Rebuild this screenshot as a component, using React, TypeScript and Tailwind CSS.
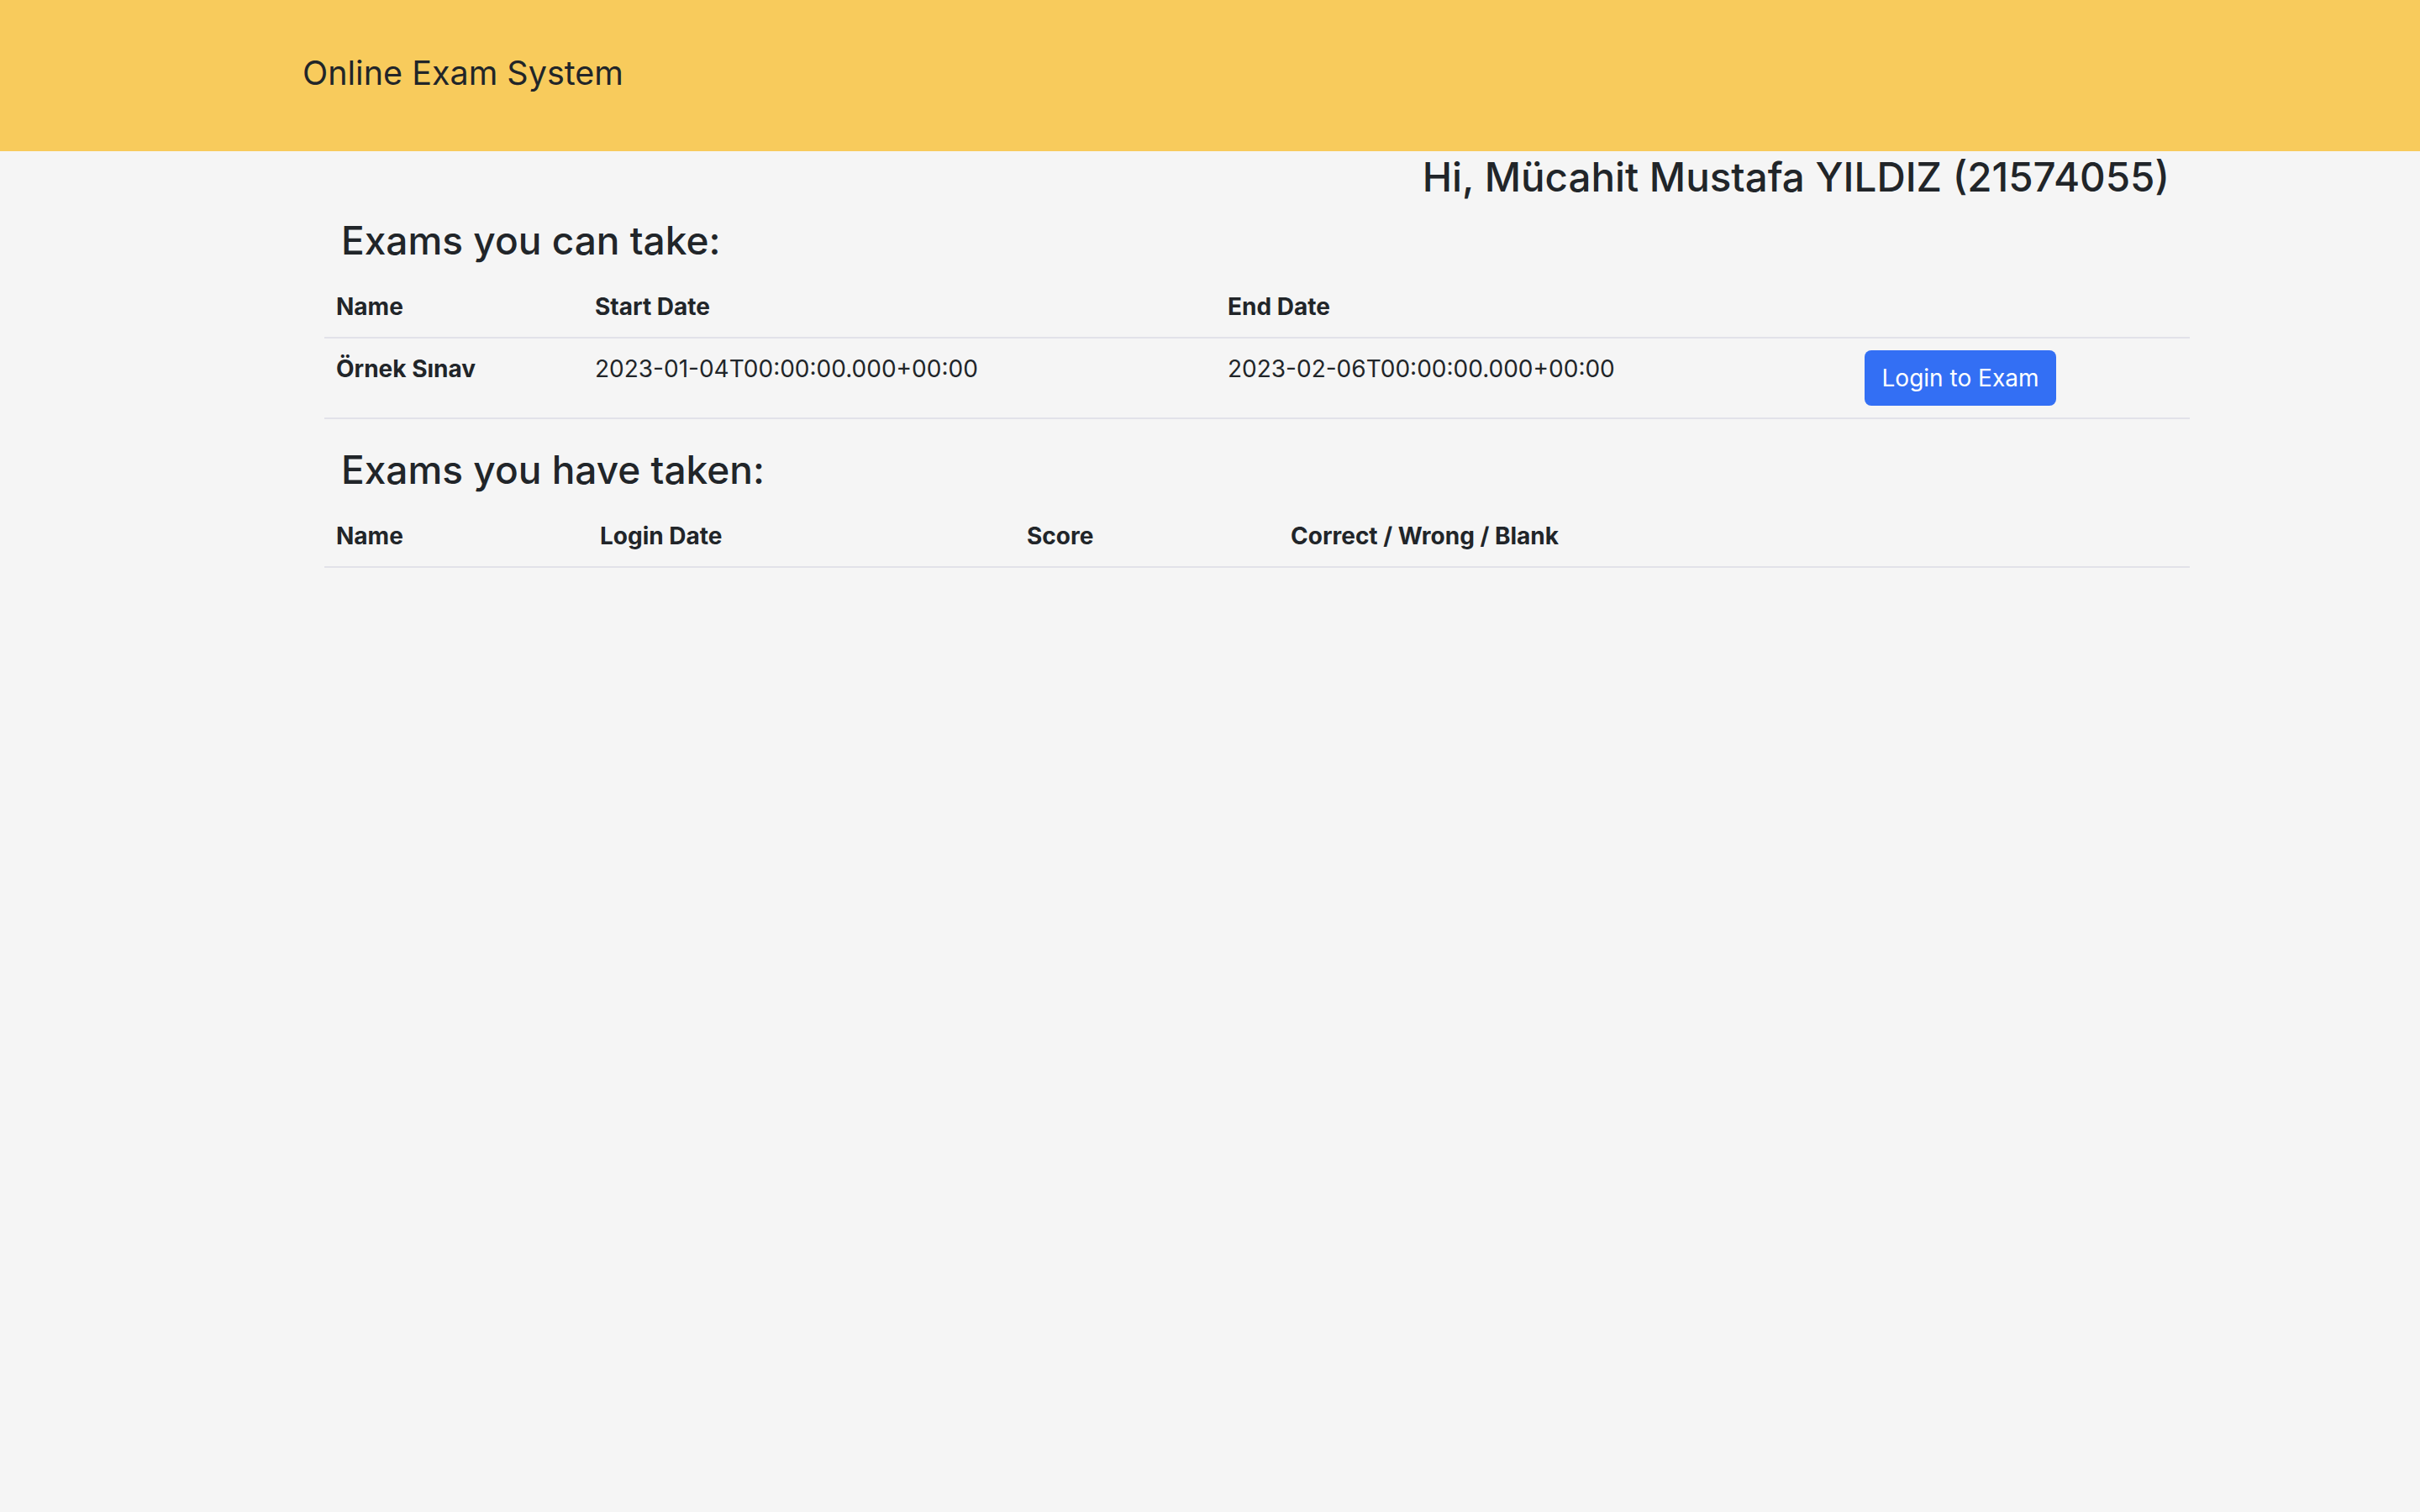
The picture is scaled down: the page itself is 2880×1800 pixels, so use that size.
import React from "react";

const font = { fontFamily: "Inter, 'Noto Sans', sans-serif" };

const Navbar: React.FC = () => (
  <nav className="h-[180px] w-full bg-[#f8cb5c]">
    <div className="pl-[360px] pt-[63px]">
      <span className="text-[39.5px] leading-[49px] font-normal text-[#212529]">
        Online Exam System
      </span>
    </div>
  </nav>
);

const ExamsToTake: React.FC = () => (
  <div className="mt-[16px]">
    {/* header row */}
    <div className="grid grid-cols-[308px_753px_758px_401px] border-b-2 border-[#e2e2e9]">
      <div className="p-[14px] text-[28px] leading-[44px] font-bold">Name</div>
      <div className="p-[14px] text-[28px] leading-[44px] font-bold">Start Date</div>
      <div className="p-[14px] text-[28px] leading-[44px] font-bold">End Date</div>
      <div className="p-[14px]" />
    </div>
    <div className="grid grid-cols-[308px_753px_758px_401px] items-start border-b-2 border-[#e2e2e9]">
      <div className="p-[14px] text-[28px] leading-[44px] font-bold">Örnek Sınav</div>
      <div className="p-[14px] text-[28px] leading-[44px]">2023-01-04T00:00:00.000+00:00</div>
      <div className="p-[14px] text-[28px] leading-[44px]">2023-02-06T00:00:00.000+00:00</div>
      <div className="p-[14px]">
        <button className="flex h-[66px] w-[228px] items-center justify-center rounded-[8px] bg-[#336ff4] text-[28px] leading-[44px] text-white">
          Login to Exam
        </button>
      </div>
    </div>
  </div>
);

const ExamsTaken: React.FC = () => (
  <div className="mt-[16px]">
    <div className="grid grid-cols-[314px_508px_314px_1084px] border-b-2 border-[#e2e2e9]">
      <div className="p-[14px] text-[28px] leading-[44px] font-bold">Name</div>
      <div className="p-[14px] text-[28px] leading-[44px] font-bold">Login Date</div>
      <div className="p-[14px] text-[28px] leading-[44px] font-bold">Score</div>
      <div className="p-[14px] text-[28px] leading-[44px] font-bold">Correct / Wrong / Blank</div>
    </div>
  </div>
);

export default function App() {
  return (
    <div className="min-h-[1800px] w-full bg-[#f5f5f5] text-[#212529]" style={font}>
      <Navbar />
      <main className="ml-[386px] w-[2220px]">
        <div className="mt-[2px] pr-[24px] text-right text-[47.5px] leading-[58px] font-medium">
          Hi, Mücahit Mustafa YILDIZ (21574055)
        </div>

        <h3 className="mt-[20px] pl-[20px] text-[46px] leading-[53px] font-medium">
          Exams you can take:
        </h3>
        <ExamsToTake />

        <h3 className="mt-[34px] pl-[20px] text-[46px] leading-[53px] font-medium">
          Exams you have taken:
        </h3>
        <ExamsTaken />
      </main>
    </div>
  );
}
